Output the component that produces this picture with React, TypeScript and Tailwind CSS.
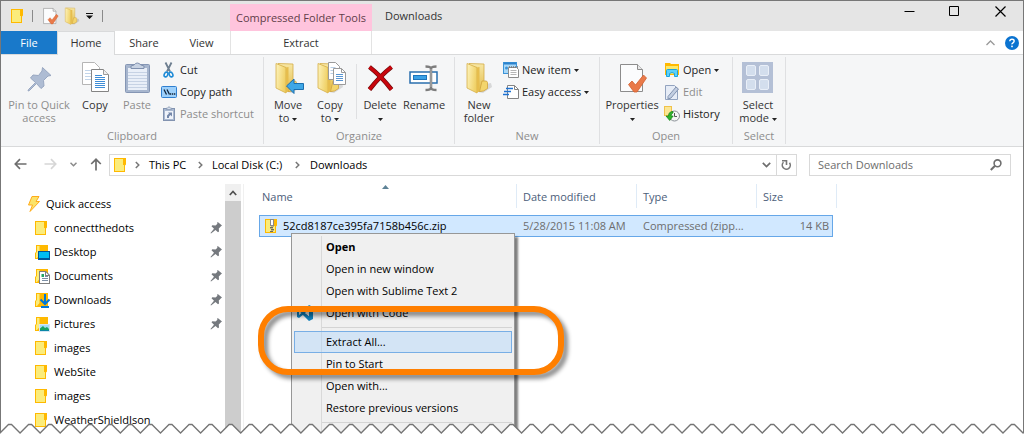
import type { ReactNode } from "react";

/* ---------- Icons ---------- */

function FolderIcon({ kind = "plain" }: { kind?: string }) {
  if (kind === "plain" || kind === "zip") {
    return (
      <svg width="12" height="14" viewBox="0 0 12 14" className="shrink-0" aria-hidden="true">
        <path d="M0 0h12v6.500l-1 1V14H0z" fill="#ffb900" />
        <path d="M1 1h8v6h1v6H1z" fill="#fbec7b" />
        {kind === "zip" && (
          <g>
            <rect x="5" y="0" width="4" height="7" fill="#8a8a8a" />
            <rect x="6" y="1" width="2" height="5" fill="#fff" />
            <path d="M5 8.500h3M6 10.500h3M5 12.500h3" stroke="#6b6b5a" />
            <path d="M6 7.500h3M5 9.500h3M6 11.500h3" stroke="#b9b28a" />
          </g>
        )}
      </svg>
    );
  }
  return (
    <svg width="15" height="16" viewBox="0 0 15 16" className="shrink-0" aria-hidden="true">
      <path d="M1 1h12v14H0V9l1-1z" fill="#ffb900" />
      <path d="M2 2h2.500v9L2 14H1V9l1-1z" fill="#fbec7b" />
      {kind === "desktop" && (
        <g>
          <rect x="3" y="7" width="12" height="9" fill="#005499" />
          <rect x="4" y="8" width="10" height="6" fill="#00bcf2" />
        </g>
      )}
      {kind === "documents" && (
        <g>
          <path d="M4 3h7l4 4v9H4z" fill="#808080" />
          <path d="M5 4h5v4h4v7H5z" fill="#fff" />
          <path d="M11 4.500V7h2.500z" fill="#fff" />
          <rect x="6.500" y="6" width="2.500" height="3" fill="#20a464" />
          <path d="M7 10.500h6M7 12.500h6M10 8.500h3" stroke="#7c8fa5" />
        </g>
      )}
      {kind === "downloads" && (
        <path d="M10 2v10M5.500 7.500 10 12l4.500-4.500M6 15h8" fill="none" stroke="#0078d7" strokeWidth="2" />
      )}
      {kind === "pictures" && (
        <g>
          <rect x="4" y="8" width="11" height="8" fill="#d5e6f3" />
          <rect x="5" y="9" width="9" height="6" fill="#a5dcf7" />
          <path d="M5 12.500 8 10l2 2 2-1 2 2v2H5z" fill="#1aa260" />
          <path d="M5 14h9v1H5z" fill="#0b87a6" />
        </g>
      )}
    </svg>
  );
}

function GoldFolder({ size = 32, overlay }: { size?: number; overlay?: "move" | "copy" }) {
  return (
    <svg width={size} height={size} viewBox="0 0 32 32" aria-hidden="true">
      <defs>
        <linearGradient id="goldFront" x1="0" y1="0" x2="1" y2="0.300">
          <stop offset="0" stopColor="#fdf3bd" />
          <stop offset="1" stopColor="#f0d166" />
        </linearGradient>
        <linearGradient id="goldBack" x1="0" y1="0" x2="0" y2="1">
          <stop offset="0" stopColor="#f7e7a4" />
          <stop offset="1" stopColor="#e3bc4c" />
        </linearGradient>
      </defs>
      <path d="M23 22l5-1 1 4-9 6-5-1z" fill="#000" opacity="0.120" />
      <path d="M6 1.500 21 2v26l-5 1.500L6 26z" fill="url(#goldBack)" stroke="#d3ac48" strokeWidth="0.800" />
      <path d="M19 19h4.500l1 1.500v6L20.500 29l-4 .500z" fill="#f3d56c" stroke="#cfa23c" strokeWidth="0.800" />
      <path d="M4 1.500 14 5.500V31L4 26z" fill="url(#goldFront)" stroke="#d6ae48" strokeWidth="0.800" />
      <path d="M14 5.500 16.500 5v23.500L14 31z" fill="#e6bd4d" />
      {overlay === "move" && (
        <path d="M14.500 24 22 17v4.500h9.500v6H22V31.500z" fill="#3ea7e6" stroke="#1c6fae" />
      )}
      {overlay === "copy" && (
        <g fill="#fff" stroke="#9a9a9a">
          <path d="M14.500.500h7l4 4v13h-11z" />
          <path d="M16.500 5.500h5M16.500 8.500h5M16.500 11.500h5" stroke="#b8cfe6" />
          <path d="M19.500 6.500h8l4 4v12h-12z" />
          <path d="M27.500 6.500v4h4" fill="none" />
          <path d="M22 12.500h7M22 14.500h7M22 16.500h7M22 18.500h7" stroke="#5a96d2" />
        </g>
      )}
    </svg>
  );
}

function CheckPage({ size = 32 }: { size?: number }) {
  return (
    <svg width={size} height={size} viewBox="0 0 32 32" aria-hidden="true">
      <path d="M4.500 2.500h17l5 5v22h-22z" fill="#fbfcfd" stroke="#8c8c8c" />
      <path d="M21.500 2.500v5h5" fill="#e8e8e8" stroke="#8c8c8c" />
      <path d="M12.500 22.500l3.500-3.500 3.500 4 8-10 3 3-9.500 14h-3z" fill="#e97a4a" stroke="#d2602f" strokeWidth="0.800" />
    </svg>
  );
}

const pinIcon = (
  <svg width="32" height="32" viewBox="0 0 32 32" aria-hidden="true">
    <path d="M19.500 5.500 28 13.500l-3 .500-4.500 4.500.500 5.500-3 2.500-4.500-5-7 7-1.500.500.500-1.500 7-7-5-4.500 2.500-3 5.500.500L19 9z" fill="#aebcd3" stroke="#98a7c1" strokeLinejoin="round" />
  </svg>
);

const copyIcon = (
  <svg width="32" height="32" viewBox="0 0 32 32" aria-hidden="true">
    <g fill="#fff" stroke="#9c9c9c">
      <path d="M3.500.500h12l5 5v17h-17z" stroke="#b5b5b5" />
      <path d="M6 8.500h7M6 11.500h7M6 14.500h7M6 17.500h7" stroke="#c2d5ea" />
      <path d="M12.500 7.500h12l5 5v17h-17z" stroke="#848484" />
      <path d="M24.500 7.500v5h5" fill="#eee" />
      <path d="M16 13.500h7M16 15.500h10M16 17.500h10M16 19.500h10M16 21.500h10M16 23.500h10M16 25.500h10" stroke="#3f8dd6" />
    </g>
  </svg>
);

const pasteIcon = (
  <svg width="32" height="32" viewBox="0 0 32 32" aria-hidden="true">
    <rect x="4.500" y="2.500" width="24" height="28" rx="1" fill="#a7b6ce" stroke="#8596b4" />
    <rect x="7" y="6" width="19" height="22" fill="#e9eff8" />
    <path d="M7 10.500h19M7 13.500h19M7 16.500h19M7 19.500h19M7 22.500h19M7 25.500h19" stroke="#c6d2e4" />
    <path d="M10 6.500V4l3-1q3-4 7 0l3 1v2.500z" fill="#c7d2e2" stroke="#7f90ae" />
  </svg>
);

const deleteIcon = (
  <svg width="32" height="32" viewBox="0 0 32 32" aria-hidden="true">
    <path d="M5.500 5Q17 14 27.500 27.500M27.500 5Q16 14 5.500 27.500" fill="none" stroke="#6f0a0a" strokeWidth="4.500" />
    <path d="M5.500 5Q17 14 27.500 27.500M27.500 5Q16 14 5.500 27.500" fill="none" stroke="#c8060d" strokeWidth="3.200" />
  </svg>
);

const renameIcon = (
  <svg width="32" height="32" viewBox="0 0 32 32" aria-hidden="true">
    <rect x="2" y="10" width="27" height="11" fill="#fff" stroke="#2a6fae" strokeWidth="1.500" />
    <rect x="5.500" y="13.500" width="13" height="4" fill="#3aa0e6" stroke="#1d74bb" />
    <path d="M17.500 4.500q5 0 5.500 2 .500-2 5.500-2M23 6v20M17.500 28q5 0 5.500-2 .500 2 5.500 2" fill="none" stroke="#7d7d7d" strokeWidth="2.500" />
    <path d="M23 7v18" stroke="#b5b5b5" />
  </svg>
);

const selectIcon = (
  <svg width="32" height="32" viewBox="0 0 32 32" aria-hidden="true">
    <rect width="31" height="31" x="0" y="0" fill="#b4c0d6" />
    <g fill="#d3deed" stroke="#e9eff8">
      <rect x="4.500" y="3.500" width="9" height="10" rx="1.500" />
      <rect x="17.500" y="3.500" width="9" height="10" rx="1.500" />
      <rect x="4.500" y="17.500" width="9" height="10" rx="1.500" />
      <rect x="17.500" y="17.500" width="9" height="10" rx="1.500" />
    </g>
  </svg>
);

function Small({ children }: { children: ReactNode }) {
  return (
    <svg width="16" height="16" viewBox="0 0 16 16" className="shrink-0" aria-hidden="true">
      {children}
    </svg>
  );
}

const cutIcon = (
  <Small>
    <path d="M4.500.500 9 9.500M10.500.500 6 9.500" stroke="#6e7f90" strokeWidth="1.800" fill="none" />
    <ellipse cx="5" cy="12.500" rx="1.700" ry="2.500" transform="rotate(25 5 12.500)" fill="none" stroke="#1d8ad6" strokeWidth="1.600" />
    <ellipse cx="10" cy="12.500" rx="1.700" ry="2.500" transform="rotate(-25 10 12.500)" fill="none" stroke="#1d8ad6" strokeWidth="1.600" />
  </Small>
);

const copyPathIcon = (
  <Small>
    <rect x="0.500" y="2.500" width="15" height="11" rx="1" fill="#9dd0fb" stroke="#2f7fd0" />
    <path d="M3 5.500l2.500 5M6 5.500l2.500 5" stroke="#10243a" strokeWidth="1.300" />
    <path d="M9 10h1.300M11 10h1.300M13 10h1.300" stroke="#10243a" strokeWidth="1.300" />
  </Small>
);

const pasteShortcutIcon = (
  <Small>
    <rect x="2.500" y="2.500" width="11" height="12" fill="#a9b8d0" stroke="#8293b0" />
    <rect x="4" y="5" width="8" height="8" fill="#eff3fa" />
    <path d="M5.500 3.500V2h1.500l1-1.500L9 2h1.500v1.500z" fill="#d8e0ec" stroke="#8293b0" strokeWidth="0.700" />
    <path d="M6 12V9.500L8 7.500 7 6.500h4v4L9.500 9 8 10.500V12z" fill="#7588aa" />
  </Small>
);

const newItemIcon = (
  <Small>
    <rect x="0.500" y="0.500" width="13" height="11" fill="#a8d8f8" stroke="#3c94d8" />
    <path d="M1 1.500h12" stroke="#2c82cc" strokeWidth="2" />
    <circle cx="3.500" cy="6" r="1.500" fill="#3c94d8" />
    <path d="M5.500 5.500h8l2 2v8h-10z" fill="#fff" stroke="#8b8b8b" />
    <path d="M7.500 8.500h6M7.500 10.500h6M7.500 12.500h6" stroke="#b6b6b6" />
    <path d="M6 5h9" stroke="#777" strokeWidth="1.500" strokeDasharray="1 1" />
  </Small>
);

const easyAccessIcon = (
  <Small>
    <path d="M4.500 1.500h7l4 4v9h-11z" fill="#fff" stroke="#848484" />
    <path d="M11.500 1.500v4h4" fill="none" stroke="#848484" />
    <path d="M3 4.500h7M1 7.500h7M0 10.500h6" stroke="#1d72d2" strokeWidth="1.300" />
  </Small>
);

const openIcon = (
  <Small>
    <path d="M1 1h5l1 1h8v11H1z" fill="#ffb900" />
    <path d="M2 4h12v8H2z" fill="#fbe96a" />
    <path d="M2.500 14.500v-6q0-1 1-1h9q1 0 1 1v6h-3v-3q-2.500-2-5 0v3z" fill="#5ad0fb" stroke="#1ba3dc" />
  </Small>
);

const editIcon = (
  <Small>
    <path d="M1.500 1.500h9l3 3v11h-12z" fill="#e6ecf6" stroke="#92a3bf" />
    <path d="M4 12.500 12 3l2.500 2L7 14l-3 1z" fill="#c2cee1" stroke="#8293b0" />
  </Small>
);

const historyIcon = (
  <Small>
    <path d="M0 0h8v10H0z" fill="#f0c24a" />
    <path d="M1 1h6v8H1z" fill="#fbe694" />
    <circle cx="10.500" cy="10" r="5" fill="#f4f5f6" stroke="#8a9097" />
    <path d="M10.500 7v3.500H13" fill="none" stroke="#555" />
    <path d="M9 5.500Q4.500 5.500 4.500 10H2l3.700 4.500L9.200 10H7q0-2.500 2-3z" fill="#2fb52b" stroke="#138016" strokeWidth="0.700" />
  </Small>
);

const Caret = () => (
  <svg width="5" height="3" viewBox="0 0 5 3" aria-hidden="true" className="inline-block align-middle">
    <path d="M0 0h5L2.500 3z" fill="#222" />
  </svg>
);

const Crumb = () => (
  <svg width="5" height="8" viewBox="0 0 5 8" className="shrink-0" aria-hidden="true">
    <path d="M.800 1l3 3-3 3" fill="none" stroke="#777" strokeWidth="1.500" />
  </svg>
);

const PushPin = () => (
  <svg width="12" height="12" viewBox="0 0 12 12" className="ml-auto shrink-0" aria-hidden="true">
    <path d="M7 1l.800-1L12 3.500l-1 .700L8.800 6.500 9 9.500l-1 .800L5.500 8 1 11.500l-.500-.500L4 6.700 1.500 4.300l.800-1 3.200.200L7.500 1.800z" fill="#75797e" />
  </svg>
);

/* ---------- Ribbon ---------- */

type LargeProps = { icon: ReactNode; lines: string[]; width: string; caret?: boolean; disabled?: boolean };

function LargeButton({ icon, lines, width, caret, disabled }: LargeProps) {
  const tone = disabled ? "text-[#8d8d8d]" : "text-[#333]";
  return (
    <button type="button" disabled={disabled} className={`flex flex-col items-center pt-[5px] ${width} ${tone}`}>
      {icon}
      <span className="mt-1 leading-[13px] whitespace-nowrap">
        {lines.map((line, i) => (
          <span key={line} className="block">
            {line}
            {caret && i > 0 && i === lines.length - 1 && <span> <Caret /></span>}
          </span>
        ))}
        {caret && lines.length === 1 && <span className="block"><Caret /></span>}
      </span>
    </button>
  );
}

function SmallButton({ icon, label, caret, disabled }: { icon: ReactNode; label: string; caret?: boolean; disabled?: boolean }) {
  const tone = disabled ? "text-[#8d8d8d]" : "text-[#222]";
  return (
    <button type="button" disabled={disabled} className={`flex h-[22px] items-center gap-[3px] whitespace-nowrap ${tone}`}>
      {icon}
      <span>{label}</span>
      {caret && <Caret />}
    </button>
  );
}

function Group({ label, width, children }: { label: string; width: string; children: ReactNode }) {
  return (
    <section aria-label={label} className={`my-[2px] flex shrink-0 flex-col border-r border-[#dfe0e2] ${width}`}>
      <div className="flex h-[73px] items-start pl-[3px]">{children}</div>
      <div className="text-center leading-4 text-[#8d8d8d]">{label}</div>
    </section>
  );
}

function Ribbon() {
  return (
    <div className="flex h-[92px] border-b border-[#d9dadb] bg-[#f5f6f7]">
      <Group label="Clipboard" width="w-[263px]">
        <LargeButton icon={pinIcon} lines={["Pin to Quick", "access"]} width="w-[70px]" disabled />
        <LargeButton icon={copyIcon} lines={["Copy"]} width="w-[42px]" />
        <LargeButton icon={pasteIcon} lines={["Paste"]} width="w-[42px]" disabled />
        <div className="pt-[2px] pl-[3px]">
          <SmallButton icon={cutIcon} label="Cut" />
          <SmallButton icon={copyPathIcon} label="Copy path" />
          <SmallButton icon={pasteShortcutIcon} label="Paste shortcut" disabled />
        </div>
      </Group>
      <Group label="Organize" width="w-[191px]">
        <LargeButton icon={<GoldFolder overlay="move" />} lines={["Move", "to"]} width="w-[42px]" caret />
        <LargeButton icon={<GoldFolder overlay="copy" />} lines={["Copy", "to"]} width="w-[42px]" caret />
        <div className="mt-[7px] mr-[2px] ml-[5px] h-[55px] w-px bg-[#dfe0e2]" />
        <LargeButton icon={deleteIcon} lines={["Delete"]} width="w-[42px]" caret />
        <LargeButton icon={renameIcon} lines={["Rename"]} width="w-[46px]" />
      </Group>
      <Group label="New" width="w-[145px]">
        <LargeButton icon={<GoldFolder />} lines={["New", "folder"]} width="w-[42px]" />
        <div className="pt-[2px] pl-[3px]">
          <SmallButton icon={newItemIcon} label="New item" caret />
          <SmallButton icon={easyAccessIcon} label="Easy access" caret />
        </div>
      </Group>
      <Group label="Open" width="w-[133px]">
        <LargeButton icon={<CheckPage />} lines={["Properties"]} width="w-[58px]" caret />
        <div className="pt-[2px] pl-[3px]">
          <SmallButton icon={openIcon} label="Open" caret />
          <SmallButton icon={editIcon} label="Edit" disabled />
          <SmallButton icon={historyIcon} label="History" />
        </div>
      </Group>
      <Group label="Select" width="w-[53px]">
        <LargeButton icon={selectIcon} lines={["Select", "mode"]} width="w-[44px]" caret />
      </Group>
    </div>
  );
}

/* ---------- Title bar and tabs ---------- */

function TitleBar() {
  return (
    <header className="flex h-[30px] bg-[#e5e5e5]">
      <div className="flex w-[229px] shrink-0 items-center pl-[10px]">
        <FolderIcon />
        <span className="ml-[9px] h-3 w-px bg-[#8a8a8a]" />
        <button type="button" aria-label="Properties" className="ml-2"><CheckPage size={18} /></button>
        <button type="button" aria-label="New folder" className="ml-1"><GoldFolder size={18} /></button>
        <button type="button" aria-label="Customize toolbar" className="ml-[5px]">
          <svg width="8" height="6" viewBox="0 0 8 6" aria-hidden="true">
            <path d="M0 0h7v1H0zM0 2.500h7L3.500 6z" fill="#111" />
          </svg>
        </button>
        <span className="ml-2 h-3 w-px bg-[#8a8a8a]" />
      </div>
      <div className="mt-[3px] flex w-[142px] shrink-0 items-center justify-center bg-[#ffc4dd] whitespace-nowrap text-[#5f3e49]">
        Compressed Folder Tools
      </div>
      <h1 className="flex flex-1 items-center pl-[13px] text-[#333]">Downloads</h1>
      <div className="flex h-[21px] shrink-0">
        <button type="button" aria-label="Minimize" className="flex w-[46px] items-center justify-center">
          <svg width="11" height="11" viewBox="0 0 11 11" aria-hidden="true"><path d="M.500 5.500h10" stroke="#000" /></svg>
        </button>
        <button type="button" aria-label="Maximize" className="flex w-[45px] items-center justify-center">
          <svg width="11" height="11" viewBox="0 0 11 11" aria-hidden="true"><path d="M.500.500h9v9h-9z" fill="none" stroke="#000" /></svg>
        </button>
        <button type="button" aria-label="Close" className="flex w-[46px] items-center justify-center">
          <svg width="11" height="11" viewBox="0 0 11 11" aria-hidden="true"><path d="M.500.500l10 10M10.500.500l-10 10" stroke="#000" strokeWidth="1.200" /></svg>
        </button>
      </div>
    </header>
  );
}

function Tabs() {
  const tab = "h-[23px] text-center text-[#333]";
  return (
    <nav className="flex h-6 border-b border-[#d9dadb] bg-white">
      <button type="button" className="h-[23px] w-14 bg-[#1979ca] text-center text-white">File</button>
      <button type="button" className="h-6 w-[58px] border-x border-t border-[#d9dadb] bg-[#f5f6f7] pb-[2px] text-center text-[#333]">Home</button>
      <button type="button" className={`w-[58px] ${tab}`}>Share</button>
      <button type="button" className={`w-[57px] ${tab}`}>View</button>
      <button type="button" className={`w-[142px] border-x border-[#e3e3e3] ${tab}`}>Extract</button>
      <button type="button" aria-label="Collapse ribbon" className="ml-auto h-[23px]">
        <svg width="9" height="6" viewBox="0 0 9 6" aria-hidden="true"><path d="M.500 5l4-4 4 4" fill="none" stroke="#999" strokeWidth="1.300" /></svg>
      </button>
      <button type="button" aria-label="Help" className="mr-1 ml-[10px] h-[23px]">
        <svg width="14" height="14" viewBox="0 0 14 14" aria-hidden="true">
          <circle cx="7" cy="7" r="7" fill="#0b73d0" />
          <path d="M4.800 5.300q.100-2 2.200-2t2.200 1.800q0 1-1.200 1.700t-1 1.500" fill="none" stroke="#fff" strokeWidth="1.400" />
          <rect x="6.200" y="9.600" width="1.600" height="1.600" fill="#fff" />
        </svg>
      </button>
    </nav>
  );
}

/* ---------- Address row ---------- */

function AddressRow() {
  return (
    <div className="flex h-[37px] pt-[7px] pr-3 pl-[13px]">
      <div className="flex h-[20px] w-[95px] shrink-0 items-center">
        <button type="button" aria-label="Back">
          <svg width="13" height="12" viewBox="0 0 13 12" aria-hidden="true"><path d="M12.500 6H1.500M6 1.200 1.300 6 6 10.800" fill="none" stroke="#6e6e6e" strokeWidth="1.700" /></svg>
        </button>
        <button type="button" aria-label="Forward" disabled className="ml-[17px]">
          <svg width="13" height="12" viewBox="0 0 13 12" aria-hidden="true"><path d="M.500 6h11M7 1.200 11.700 6 7 10.800" fill="none" stroke="#d6d6d6" strokeWidth="1.700" /></svg>
        </button>
        <button type="button" aria-label="Recent locations" className="ml-[13px]">
          <svg width="7" height="5" viewBox="0 0 7 5" aria-hidden="true"><path d="M.500.800l3 3 3-3" fill="none" stroke="#8a8a8a" strokeWidth="1.500" /></svg>
        </button>
        <button type="button" aria-label="Up" className="ml-[13px]">
          <svg width="12" height="13" viewBox="0 0 12 13" aria-hidden="true"><path d="M6 12.500V1.500M1.200 6 6 1.300 10.800 6" fill="none" stroke="#6e6e6e" strokeWidth="1.700" /></svg>
        </button>
      </div>
      <div className="flex h-[22px] flex-1 items-center border border-[#d9d9d9] pl-1 whitespace-nowrap text-black">
        <FolderIcon />
        <span className="ml-[9px]"><Crumb /></span>
        <a href="#this-pc" className="ml-[9px] w-[49px]">This PC</a>
        <Crumb />
        <a href="#local-disk" className="ml-[9px] w-[83px]">Local Disk (C:)</a>
        <Crumb />
        <a href="#downloads" className="ml-[10px]">Downloads</a>
        <button type="button" aria-label="Previous locations" className="mr-[5px] ml-auto">
          <svg width="9" height="6" viewBox="0 0 9 6" aria-hidden="true"><path d="M.800.800l3.700 3.700L8.200.800" fill="none" stroke="#6e6e6e" strokeWidth="1.700" /></svg>
        </button>
        <button type="button" aria-label="Refresh" className="flex h-5 w-5 items-center justify-center border-l border-[#d9d9d9]">
          <svg width="11" height="12" viewBox="0 0 11 12" aria-hidden="true">
            <path d="M8.500 3.800A4 4 0 1 1 2.500 3.300" fill="none" stroke="#777" strokeWidth="1.600" />
            <path d="M1 1.800h4.500V6" fill="none" stroke="#777" strokeWidth="1.600" />
          </svg>
        </button>
      </div>
      <label className="ml-3 flex h-[22px] w-[202px] shrink-0 items-center border border-[#d9d9d9] pr-2 pl-2">
        <input type="search" aria-label="Search Downloads" placeholder="Search Downloads" className="min-w-0 flex-1 bg-transparent outline-none placeholder:text-[#6d6d6d]" />
        <svg width="12" height="12" viewBox="0 0 12 12" aria-hidden="true">
          <circle cx="7.500" cy="4.300" r="3.400" fill="none" stroke="#6e6e6e" strokeWidth="1.600" />
          <path d="M5 6.800.800 11" stroke="#6e6e6e" strokeWidth="2" />
        </svg>
      </label>
    </div>
  );
}

/* ---------- Navigation pane ---------- */

const places = [
  { name: "connectthedots", kind: "plain", pinned: true },
  { name: "Desktop", kind: "desktop", pinned: true },
  { name: "Documents", kind: "documents", pinned: true },
  { name: "Downloads", kind: "downloads", pinned: true },
  { name: "Pictures", kind: "pictures", pinned: true },
  { name: "images", kind: "plain", pinned: false },
  { name: "WebSite", kind: "plain", pinned: false },
  { name: "images", kind: "plain", pinned: false },
  { name: "WeatherShieldJson", kind: "plain", pinned: false },
];

function Sidebar() {
  return (
    <aside className="flex w-[243px] shrink-0 border-r border-[#f0f0f0] pr-[2px]">
      <div className="flex-1 pt-2 pb-[3px]">
        <a href="#quick-access" className="flex h-6 items-center pl-[27px]">
          <svg width="12" height="16" viewBox="0 0 12 16" className="shrink-0" aria-hidden="true">
            <path d="M4 .500h7L8 5.500h3.500L2 15.500l2.500-6.500H.500z" fill="#fbe36a" stroke="#ffab1a" strokeLinejoin="round" />
          </svg>
          <span className="pl-[6px]">Quick access</span>
        </a>
        {places.map((place, i) => (
          <a key={i} href={`#place-${i}`} className="flex h-6 items-center pr-[3px] pl-[34px]">
            <span className="flex w-[19px] shrink-0">
              <FolderIcon kind={place.kind} />
            </span>
            <span>{place.name}</span>
            {place.pinned && <PushPin />}
          </a>
        ))}
      </div>
      <div className="flex w-4 flex-col bg-[#cdcdcd]">
        <button type="button" aria-label="Scroll up" className="flex h-[17px] items-center justify-center bg-[#f0f0f0]">
          <svg width="8" height="6" viewBox="0 0 8 6" aria-hidden="true"><path d="M.800 5 4 1.500 7.200 5" fill="none" stroke="#505050" strokeWidth="1.700" /></svg>
        </button>
      </div>
    </aside>
  );
}

/* ---------- File list ---------- */

const columns = [
  { name: "Name", width: "w-[258px] pl-[3px]", edge: "after:right-0" },
  { name: "Date modified", width: "w-[120px] pl-[6px]", edge: "after:right-0" },
  { name: "Type", width: "w-[120px] pl-[6px]", edge: "after:right-0" },
  { name: "Size", width: "w-[76px] pl-[6px]", edge: "after:-right-[4px]" },
];

function FileTable() {
  return (
    <table className="w-[574px] table-fixed border-separate border-spacing-0 text-left whitespace-nowrap">
      <thead>
        <tr>
          {columns.map((col) => (
            <th
              key={col.name}
              scope="col"
              className={`relative h-[31px] p-0 align-top leading-[26px] font-normal text-[#4c607a] after:absolute after:top-0 after:h-6 after:w-px after:bg-[#dfebf7] ${col.width} ${col.edge}`}
            >
              {col.name}
              {col.name === "Name" && (
                <svg width="7" height="4" viewBox="0 0 7 4" className="absolute top-px right-[128px]" aria-label="Sorted ascending">
                  <path d="M3.500 0 7 4H0z" fill="#5d8296" />
                </svg>
              )}
            </th>
          ))}
        </tr>
      </thead>
      <tbody>
        <tr className="text-[#6d6d6d] [&>td]:h-[22px] [&>td]:border-y [&>td]:border-[#66a7e8] [&>td]:bg-[#d1e8ff] [&>td]:p-0">
          <td>
            <div className="-my-px flex h-5 items-center border-l border-[#66a7e8] pl-[5px] text-black">
              <FolderIcon kind="zip" />
              <span className="pl-[6px]">52cd8187ce395fa7158b456c.zip</span>
            </div>
          </td>
          <td><div className="pl-[6px]">5/28/2015 11:08 AM</div></td>
          <td><div className="pl-[6px]">Compressed (zipp...</div></td>
          <td className="border-r text-right"><div className="pr-[3px]">14 KB</div></td>
        </tr>
      </tbody>
    </table>
  );
}

function MenuItem({ children, icon, bold, active }: { children: ReactNode; icon?: ReactNode; bold?: boolean; active?: boolean }) {
  return (
    <button
      type="button"
      role="menuitem"
      className={`relative flex h-[22px] w-full items-center border text-black ${active ? "border-[#78aee5] bg-[#a8d2fd]/40" : "border-transparent"} ${bold ? "font-bold" : ""}`}
    >
      <span className="flex w-[31px] shrink-0 pl-[2px]">{icon}</span>
      {children}
    </button>
  );
}

const MenuRule = () => <div className="my-[3px] ml-[27px] h-px bg-[#d4d4d4]" role="separator" />;

const codeIcon = (
  <svg width="16" height="16" viewBox="0 0 16 16" aria-hidden="true">
    <path d="M0 4l2-1 10 8V5L2 13l-2-1V4zM12 0l4 2v12l-4 2-7-7V7z" fill="#1181bd" />
    <path d="M2 6v4l2.500-2zM12 5v6L8 8z" fill="#f0f0f0" />
  </svg>
);

function ContextMenu() {
  return (
    <div
      role="menu"
      aria-label="File actions"
      className="absolute top-[49px] left-[47px] w-[224px] border border-[#979797] bg-[#f0f0f0] p-[2px] pb-4 shadow-[3px_4px_2px_rgba(0,0,0,0.5)]"
    >
      <div className="absolute inset-y-[2px] left-[29px] w-px bg-[#d9d9d9]" />
      <MenuItem bold>Open</MenuItem>
      <MenuItem>Open in new window</MenuItem>
      <MenuItem>Open with Sublime Text 2</MenuItem>
      <MenuItem icon={codeIcon}>Open with Code</MenuItem>
      <MenuRule />
      <MenuItem active>Extract All...</MenuItem>
      <MenuItem>Pin to Start</MenuItem>
      <MenuItem>Open with...</MenuItem>
      <MenuItem>Restore previous versions</MenuItem>
      <MenuRule />
    </div>
  );
}

/* ---------- Torn bottom edge ---------- */

const STEP = 20.06;
const teeth = Array.from({ length: 200 }, (_, i) => {
  const x = i * STEP;
  return `L${x} 10L${x + 8.5} 1.500L${x + 11.5} 1.500`;
}).join("");

function TornEdge() {
  return (
    <svg className="absolute inset-x-0 bottom-0 h-3 w-full" aria-hidden="true">
      <path d={`M-5 40L-5 10${teeth}L4100 40Z`} fill="#fff" stroke="#757575" strokeWidth="1.300" />
    </svg>
  );
}

export default function App() {
  return (
    <div className="relative flex min-h-screen flex-col overflow-hidden bg-white font-['Open_Sans','Noto_Sans',sans-serif] text-[11px] leading-4 text-black">
      <div className="flex flex-1 flex-col border-x border-t border-[#777]">
        <TitleBar />
        <Tabs />
        <Ribbon />
        <AddressRow />
        <div className="flex flex-1">
          <Sidebar />
          <main className="relative flex-1 pl-[15px]">
            <FileTable />
            <ContextMenu />
            <div className="pointer-events-none absolute top-[122px] left-[14px] h-[69px] w-[306px] rounded-[30px] border-[6px] border-[#ff7f00] drop-shadow-[4px_4px_2px_rgba(0,0,0,0.45)]" />
          </main>
        </div>
      </div>
      <TornEdge />
    </div>
  );
}
